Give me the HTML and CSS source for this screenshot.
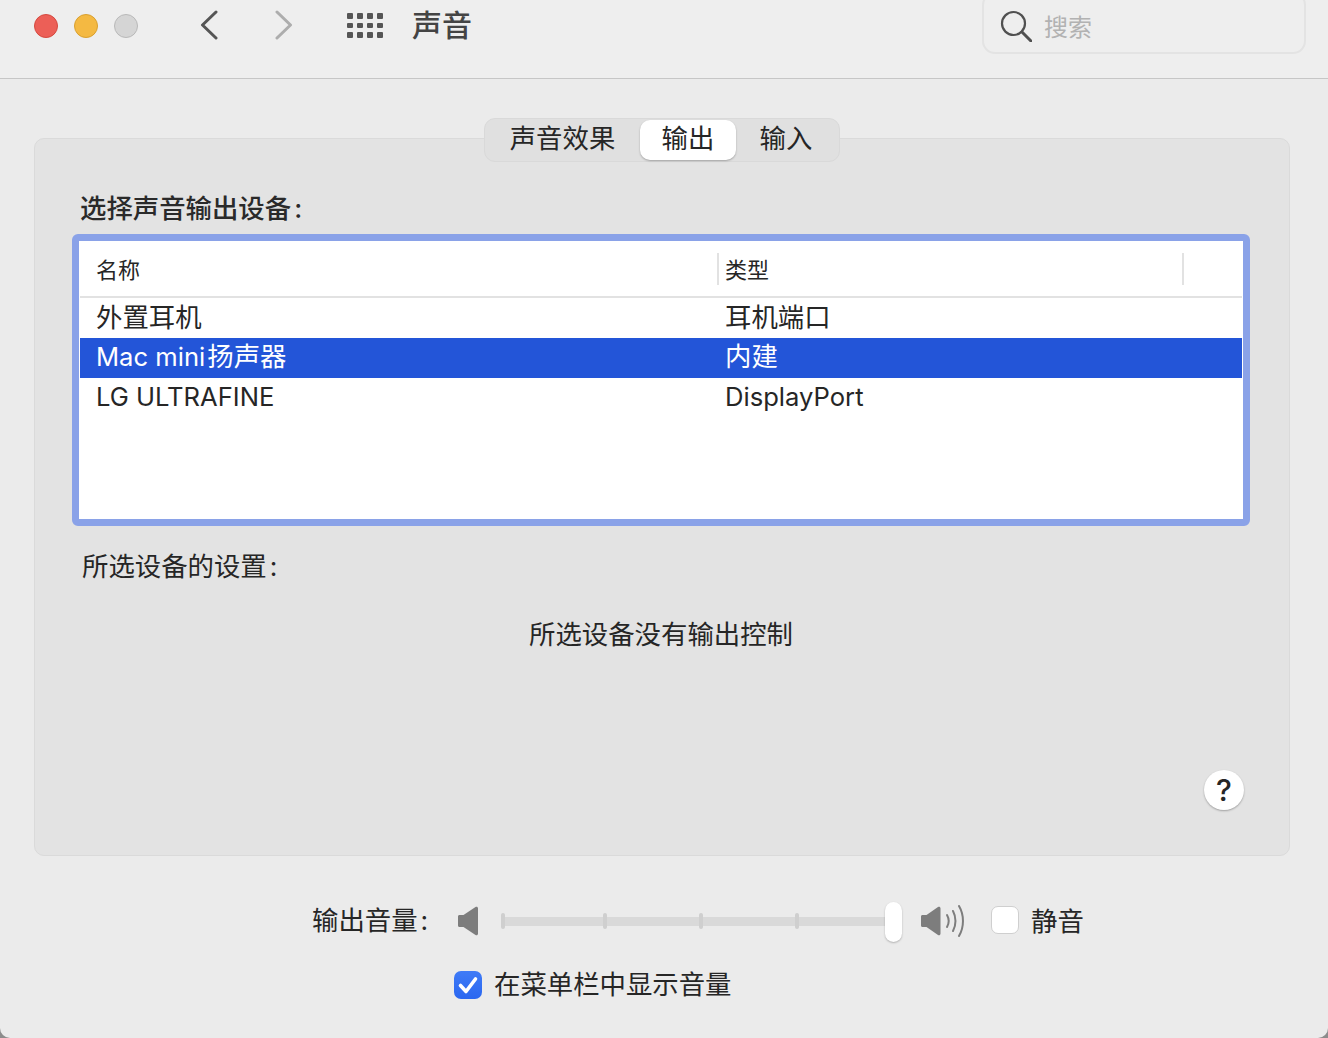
FILE: index.html
```html
<!DOCTYPE html>
<html lang="zh-CN">
<head>
<meta charset="utf-8">
<title>声音</title>
<link rel="stylesheet" href="styles.css">
</head>
<body>
<div class="window">
  <header class="toolbar">
    <div class="lights">
      <span class="light red"></span>
      <span class="light yellow"></span>
      <span class="light gray"></span>
    </div>
    <svg class="chev back" width="20" height="30" viewBox="0 0 20 30"><path d="M17 2 3.5 15 17 28" fill="none" stroke="#555" stroke-width="3" stroke-linecap="round" stroke-linejoin="round"/></svg>
    <svg class="chev fwd" width="20" height="30" viewBox="0 0 20 30"><path d="M3 2 16.5 15 3 28" fill="none" stroke="#adadad" stroke-width="3" stroke-linecap="round" stroke-linejoin="round"/></svg>
    <div class="grid-icon">
      <i></i><i></i><i></i><i></i><i></i><i></i><i></i><i></i><i></i><i></i><i></i><i></i>
    </div>
    <div class="win-title">声音</div>
    <div class="search">
      <svg width="32" height="32" viewBox="0 0 32 32"><circle cx="13.5" cy="13.5" r="11.5" fill="none" stroke="#505050" stroke-width="2.2"/><path d="M22 22 31 31" stroke="#505050" stroke-width="3" stroke-linecap="round"/></svg>
      <span class="search-text">搜索</span>
    </div>
  </header>
  <main class="content">
    <div class="tabs">
      <div class="tab t1">声音效果</div>
      <div class="tab t2 active">输出</div>
      <div class="tab t3">输入</div>
    </div>
    <section class="panel">
      <h2 class="heading">选择声音输出设备<span class="colon">:</span></h2>
      <div class="frame">
        <div class="thead">
          <div class="c1 th">名称</div>
          <div class="c2 th sep">类型</div>
          <div class="sep end"></div>
        </div>
        <div class="row"><div class="c1">外置耳机</div><div class="c2">耳机端口</div></div>
        <div class="row selected"><div class="c1"><span class="latin">Mac mini</span><span class="after-latin">扬声器</span></div><div class="c2">内建</div></div>
        <div class="row"><div class="c1 latin">LG ULTRAFINE</div><div class="c2 latin">DisplayPort</div></div>
      </div>
      <div class="sub">所选设备的设置<span class="colon">:</span></div>
      <div class="notice">所选设备没有输出控制</div>
      <div class="help">?</div>
    </section>
    <div class="volume">
      <div class="vol-label">输出音量<span class="colon">:</span></div>
      <svg class="spk-low" width="22" height="30" viewBox="0 0 22 30"><path d="M1 10.500c0-.8.6-1.500 1.500-1.500h4L18.500 1c1.200-.8 2.500 0 2.500 1.200v25.600c0 1.200-1.300 2-2.500 1.200L6.500 21h-4C1.600 21 1 20.300 1 19.500z" fill="#7d7d7d"/></svg>
      <div class="slider">
        <i class="tick"></i><i class="tick a"></i><i class="tick b"></i><i class="tick b"></i>
        <span class="thumb"></span>
      </div>
      <svg class="spk-high" width="46" height="32" viewBox="0 0 46 32"><path d="M1 11.500c0-.8.6-1.500 1.500-1.500h4L18 2c1.200-.8 2.500 0 2.500 1.200v25.600c0 1.200-1.300 2-2.500 1.200L6.500 22h-4C1.600 22 1 21.300 1 20.500z" fill="#7d7d7d"/><g fill="none" stroke="#7d7d7d" stroke-width="2" stroke-linecap="round"><path d="M27 10c2 3.500 2 8.500 0 12"/><path d="M33 6c3.300 6 3.300 14 0 20"/><path d="M39 1c5.300 9 5.300 21 0 30"/></g></svg>
      <label class="check-wrap mute"><span class="box"></span><span class="ctl-text">静音</span></label>
    </div>
    <div class="menubar-opt">
      <span class="box on"><svg width="28" height="28" viewBox="0 0 28 28"><path d="M6.500 14.500 12 20.500 21.500 8" fill="none" stroke="#fff" stroke-width="3.600" stroke-linecap="round" stroke-linejoin="round"/></svg></span>
      <span class="ctl-text">在菜单栏中显示音量</span>
    </div>
  </main>
</div>
</body>
</html>
```

FILE: styles.css
```css
* { box-sizing: border-box; }
html, body {
  margin: 0;
  height: 100%;
  background: #8c8c8c;
}
body {
  font-family: "Inter", "Noto Sans CJK SC", sans-serif;
  font-size: 26.4px;
  color: #262626;
  overflow: hidden;
}
.window {
  width: 1328px;
  height: 1038px;
  background: #ebebeb;
  border-radius: 0 0 10px 10px;
  overflow: hidden;
}
.toolbar {
  height: 79px;
  background: #eeeeee;
  border-bottom: 1px solid #c6c6c6;
  display: flex;
  align-items: flex-start;
}
.lights {
  display: flex;
  gap: 16px;
  margin: 14px 0 0 34px;
}
.light {
  width: 24px;
  height: 24px;
  border-radius: 50%;
  border: 1px solid;
}
.red { background: #ec5f57; border-color: #d5493f; }
.yellow { background: #f4b942; border-color: #d9a02f; }
.gray { background: #d5d5d5; border-color: #b9b9b9; }
.chev { display: block; margin-top: 10px; }
.back { margin-left: 61px; }
.fwd { margin-left: 55px; }
.grid-icon {
  display: grid;
  grid-template-columns: repeat(4, 5.500px);
  grid-template-rows: repeat(3, 5.500px);
  column-gap: 4.500px;
  row-gap: 4px;
  margin: 13px 0 0 53px;
}
.grid-icon i {
  background: #555;
  border-radius: 1px;
}
.win-title {
  margin: 3px 0 0 29.500px;
  font-size: 30px;
  line-height: 44px;
  font-weight: 500;
  color: #444;
}
.search {
  width: 324px;
  height: 62px;
  margin: -8px 0 0 510px;
  border: 2px solid #e3e3e3;
  border-radius: 13px;
  display: flex;
  align-items: center;
  padding: 6px 0 0 16px;
  gap: 11px;
  font-size: 24px;
  color: #b2b2b2;
}
.search-text { margin: -2px 0 0 1px; }
.content {
  padding-top: 39px;
}
.tabs {
  width: 356px;
  height: 44px;
  margin-left: 484px;
  background: #e0e0e0;
  border: 1px solid #d9d9d9;
  border-radius: 11px;
  display: flex;
  align-items: center;
  position: relative;
  z-index: 1;
}
.tab {
  height: 40px;
  line-height: 36px;
  text-align: center;
}
.t1 { width: 155px; }
.t2 { width: 96px; }
.t3 { width: 100px; }
.tab.active {
  background: #fff;
  border-radius: 10px;
  box-shadow: 0 1px 2px rgba(0, 0, 0, 0.28);
}
.panel {
  width: 1256px;
  height: 718px;
  margin: -24px 0 0 34px;
  background: #e3e3e3;
  border: 1px solid #dadada;
  border-radius: 10px;
  padding: 54px 0 0 37px;
  display: flex;
  flex-direction: column;
}
.heading {
  margin: 0 0 11px 8px;
  font-size: 26.4px;
  line-height: 30px;
  font-weight: 500;
  color: #2a2a2a;
}
.colon { margin-left: 3px; }
.frame {
  width: 1178px;
  height: 292px;
  flex: none;
  background: #fff;
  border: 7px solid #8aa2e8;
  border-radius: 6px;
  padding: 0 1px;
}
.thead {
  height: 57px;
  border-bottom: 2px solid #e2e2e2;
  display: flex;
  align-items: center;
  font-size: 22px;
}
.row {
  height: 40px;
  line-height: 39px;
  display: flex;
}
.row.selected {
  background: #2355d8;
  color: #fff;
  line-height: 37px;
}
.latin {
  font-size: 25.6px;
  line-height: 38px;
}
.after-latin { margin-left: 2px; }
.c1 {
  width: 637px;
  padding-left: 16px;
  flex: none;
}
.c2 {
  flex: none;
  padding-left: 8px;
}
.th { height: 32px; line-height: 34px; }
.th.sep {
  width: 466px;
  border-left: 2px solid #e2e2e2;
  padding-left: 6px;
  line-height: 34px;
}
.sep.end {
  width: 2px;
  height: 32px;
  background: #e2e2e2;
  margin-left: -1px;
}
.sub {
  margin: 25px 0 0 10px;
  line-height: 30px;
}
.notice {
  margin: 38px 0 0 0;
  width: 1178px;
  line-height: 30px;
  text-align: center;
}
.help {
  width: 40px;
  height: 40px;
  margin: 121px 0 0 1132px;
  background: #fff;
  border-radius: 50%;
  box-shadow: 0 1px 2px rgba(0, 0, 0, 0.3);
  text-align: center;
  line-height: 40px;
  font-size: 30px;
  font-weight: 500;
}
.volume {
  display: flex;
  align-items: center;
  height: 40px;
  margin-top: 45px;
  padding-left: 312px;
}
.vol-label {
  width: 145px;
  line-height: 30px;
  margin-top: -3px;
}
.spk-low { flex: none; }
.slider {
  position: relative;
  width: 396px;
  height: 9px;
  margin-left: 22px;
  background: #d9d9d9;
  border-radius: 4px;
  display: flex;
  align-items: center;
  flex: none;
}
.tick {
  width: 4px;
  height: 16px;
  background: #cfcfcf;
  border-radius: 2px;
  flex: none;
}
.tick.a { margin-left: 98px; }
.tick.b { margin-left: 92px; }
.thumb {
  position: absolute;
  right: -5px;
  top: -15px;
  width: 17px;
  height: 40px;
  background: #fff;
  border-radius: 9px;
  box-shadow: 0 1px 2px rgba(0, 0, 0, 0.25);
}
.spk-high {
  flex: none;
  margin-left: 23px;
}
.check-wrap {
  display: flex;
  align-items: center;
  gap: 12px;
}
.mute { margin-left: 25px; margin-top: -2px; }
.ctl-text { line-height: 30px; margin-top: -3px; }
.mute .ctl-text { margin-top: 1px; }
.box {
  width: 28px;
  height: 28px;
  flex: none;
  background: #fff;
  border: 1px solid #cfcfcf;
  border-radius: 7px;
  display: block;
}
.box.on {
  background: linear-gradient(#3f7bf7, #2a67f0);
  border: 0;
}
.box svg { display: block; }
.menubar-opt {
  display: flex;
  align-items: center;
  gap: 12px;
  height: 40px;
  margin-top: 24px;
  padding-left: 454px;
}
```
